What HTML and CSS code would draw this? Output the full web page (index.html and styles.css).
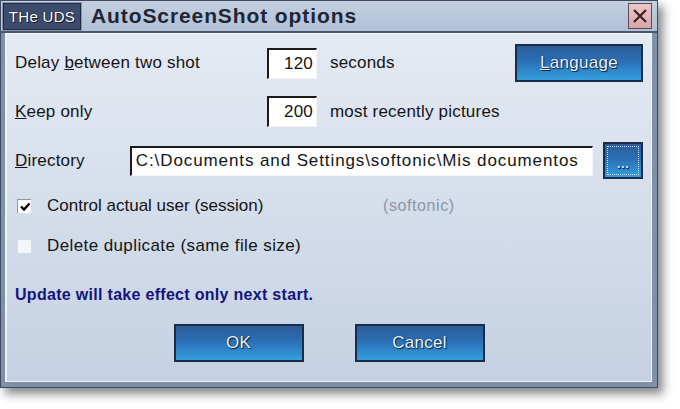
FILE: index.html
```html
<!DOCTYPE html>
<html>
<head>
<meta charset="utf-8">
<link rel="stylesheet" href="styles.css">
</head>
<body>
<div class="window">
  <div class="titlebar">
    <span class="logo">THe UDS</span>
    <span class="title">AutoScreenShot options</span>
    <span class="close">
      <svg width="16" height="16" viewBox="0 0 16 16"><path d="M2 2 L14 14 M14 2 L2 14" stroke="#3a2222" stroke-width="2.2" fill="none"/></svg>
    </span>
  </div>
  <div class="client">
    <div class="row r1">
      <span class="label"><span>Delay </span><u>b</u>etween two shot</span>
      <span class="field num">120</span>
      <span class="after">seconds</span>
      <span class="btn lang"><u>L</u>anguage</span>
    </div>
    <div class="row r2">
      <span class="label"><u>K</u>eep only</span>
      <span class="field num">200</span>
      <span class="after">most recently pictures</span>
    </div>
    <div class="row r3">
      <span class="label short"><u>D</u>irectory</span>
      <span class="field dir">C:\Documents and Settings\softonic\Mis documentos</span>
      <span class="btn dots"><span class="dotsin">...</span></span>
    </div>
    <div class="row chk c1">
      <span class="box"><svg width="12" height="12" viewBox="0 0 12 12"><path d="M2 5.5 L5 8.5 L10.5 2.5" stroke="#000" stroke-width="2.4" fill="none"/></svg></span>
      <span class="chklabel">Control actual user (session)</span>
      <span class="user">(softonic)</span>
    </div>
    <div class="row chk c2">
      <span class="box empty"></span>
      <span class="chklabel">Delete duplicate (same file size)</span>
    </div>
    <div class="note">Update will take effect only next start.</div>
    <div class="buttons">
      <span class="btn big">OK</span>
      <span class="btn big">Cancel</span>
    </div>
  </div>
</div>
</body>
</html>
```
FILE: styles.css
```css
html, body {
  margin: 0;
  padding: 0;
  background: #ffffff;
}
body {
  width: 680px;
  height: 409px;
  overflow: hidden;
  font-family: "Liberation Sans", Arial, sans-serif;
}
.window {
  width: 658px;
  height: 388px;
  box-sizing: border-box;
  background: #7f90a8;
  border: 1px solid #3e4c60;
  box-shadow: 5px 6px 9px rgba(40, 40, 50, 0.55);
  display: flex;
  flex-direction: column;
  padding: 0 5px 5px 4px;
}
.titlebar {
  height: 32px;
  margin: 0 -5px 0 -4px;
  background: linear-gradient(#c3d0e0, #b0c0d5);
  border-bottom: 2px solid #46556a;
  display: flex;
  align-items: center;
  box-sizing: border-box;
  padding: 0 5px 0 2px;
}
.logo {
  background: #3c4c6c;
  border: 1px solid #1e2a40;
  outline: 1px solid #8898b4;
  height: 25px;
  width: 76px;
  display: flex;
  align-items: center;
  justify-content: center;
  color: #ffffff;
  font-size: 15px;
  text-shadow: 0 0 1px #000, 1px 1px 0 #1a2030;
  letter-spacing: 0.3px;
}
.title {
  margin-left: 10px;
  font-weight: bold;
  font-size: 21px;
  letter-spacing: 0.9px;
  color: #1e2636;
  flex: 1;
}
.close {
  width: 22px;
  height: 24px;
  background: linear-gradient(#ecc8c8, #d6a6a6);
  border: 1px solid #5e4a50;
  display: flex;
  align-items: center;
  justify-content: center;
}
.client {
  flex: 1;
  background: linear-gradient(#e4eaf3, #c5d1e2);
  border-top: 1px solid #f4f8fc;
  border-left: 2px solid #eef2f8;
  border-right: 1px solid #f0f4fa;
  border-bottom: 1px solid #f0f4fa;
  box-sizing: border-box;
  padding: 10px 8px 0 8px;
  display: flex;
  flex-direction: column;
  color: #141414;
  font-size: 17px;
  letter-spacing: 0.2px;
}
.row {
  display: flex;
  align-items: center;
}
.r1 { height: 38px; }
.r2 { height: 31px; margin-top: 14px; }
.r3 { height: 37px; margin-top: 15px; }
.label { width: 252px; }
.label.short { width: 115px; }
.field {
  background: #ffffff;
  border-top: 2px solid #1a1a1a;
  border-left: 2px solid #1a1a1a;
  border-bottom: 1px solid #f4f6fa;
  border-right: 1px solid #f4f6fa;
  box-sizing: border-box;
  height: 31px;
  display: flex;
  align-items: center;
}
.num {
  width: 50px;
  justify-content: flex-end;
  padding-right: 3px;
}
.dir {
  width: 464px;
  height: 30px;
  padding-left: 4px;
  white-space: nowrap;
  overflow: hidden;
  letter-spacing: 0.9px;
}
.after { margin-left: 13px; }
.btn {
  display: flex;
  align-items: center;
  justify-content: center;
  box-sizing: border-box;
  border: 2px solid #1a2c48;
  background: linear-gradient(#2d5c98 0%, #2b6fb6 45%, #34a0dc 100%);
  color: #e8f4ff;
  text-shadow: 0 0 1px #0a2040, 1px 1px 1px #0a2040;
  letter-spacing: 0.3px;
}
.lang {
  margin-left: auto;
  width: 128px;
  height: 38px;
  font-size: 17px;
}
.dots {
  margin-left: 10px;
  width: 40px;
  height: 37px;
}
.dotsin {
  width: 32px;
  height: 29px;
  border: 1px dotted #c8dcf0;
  box-sizing: border-box;
  display: flex;
  align-items: center;
  justify-content: center;
  color: #c0e8ff;
  font-weight: bold;
  font-size: 14px;
  line-height: 1;
  padding-top: 4px;
}
.chk { height: 20px; }
.c1 { margin-top: 17px; }
.c2 { margin-top: 20px; }
.box {
  width: 14px;
  height: 14px;
  margin-left: 2px;
  background: #ffffff;
  box-sizing: border-box;
  border-top: 1px solid #8c98a8;
  border-left: 1px solid #8c98a8;
  display: flex;
  align-items: center;
  justify-content: center;
}
.box.empty {
  background: #f4f6fa;
  border-color: #d8dee8;
}
.chklabel { margin-left: 16px; width: 336px; letter-spacing: 0; }
.c2 .chklabel { letter-spacing: 0.4px; }
.user {
  color: #8c96a6;
  font-size: 16px;
  letter-spacing: 0.6px;
}
.note {
  margin-top: 29px;
  height: 20px;
  line-height: 20px;
  font-weight: bold;
  font-size: 16px;
  letter-spacing: 0.3px;
  color: #14147c;
}
.buttons {
  margin-top: 19px;
  display: flex;
  justify-content: center;
  gap: 51px;
}
.big {
  width: 130px;
  height: 38px;
  font-size: 17px;
}
```
